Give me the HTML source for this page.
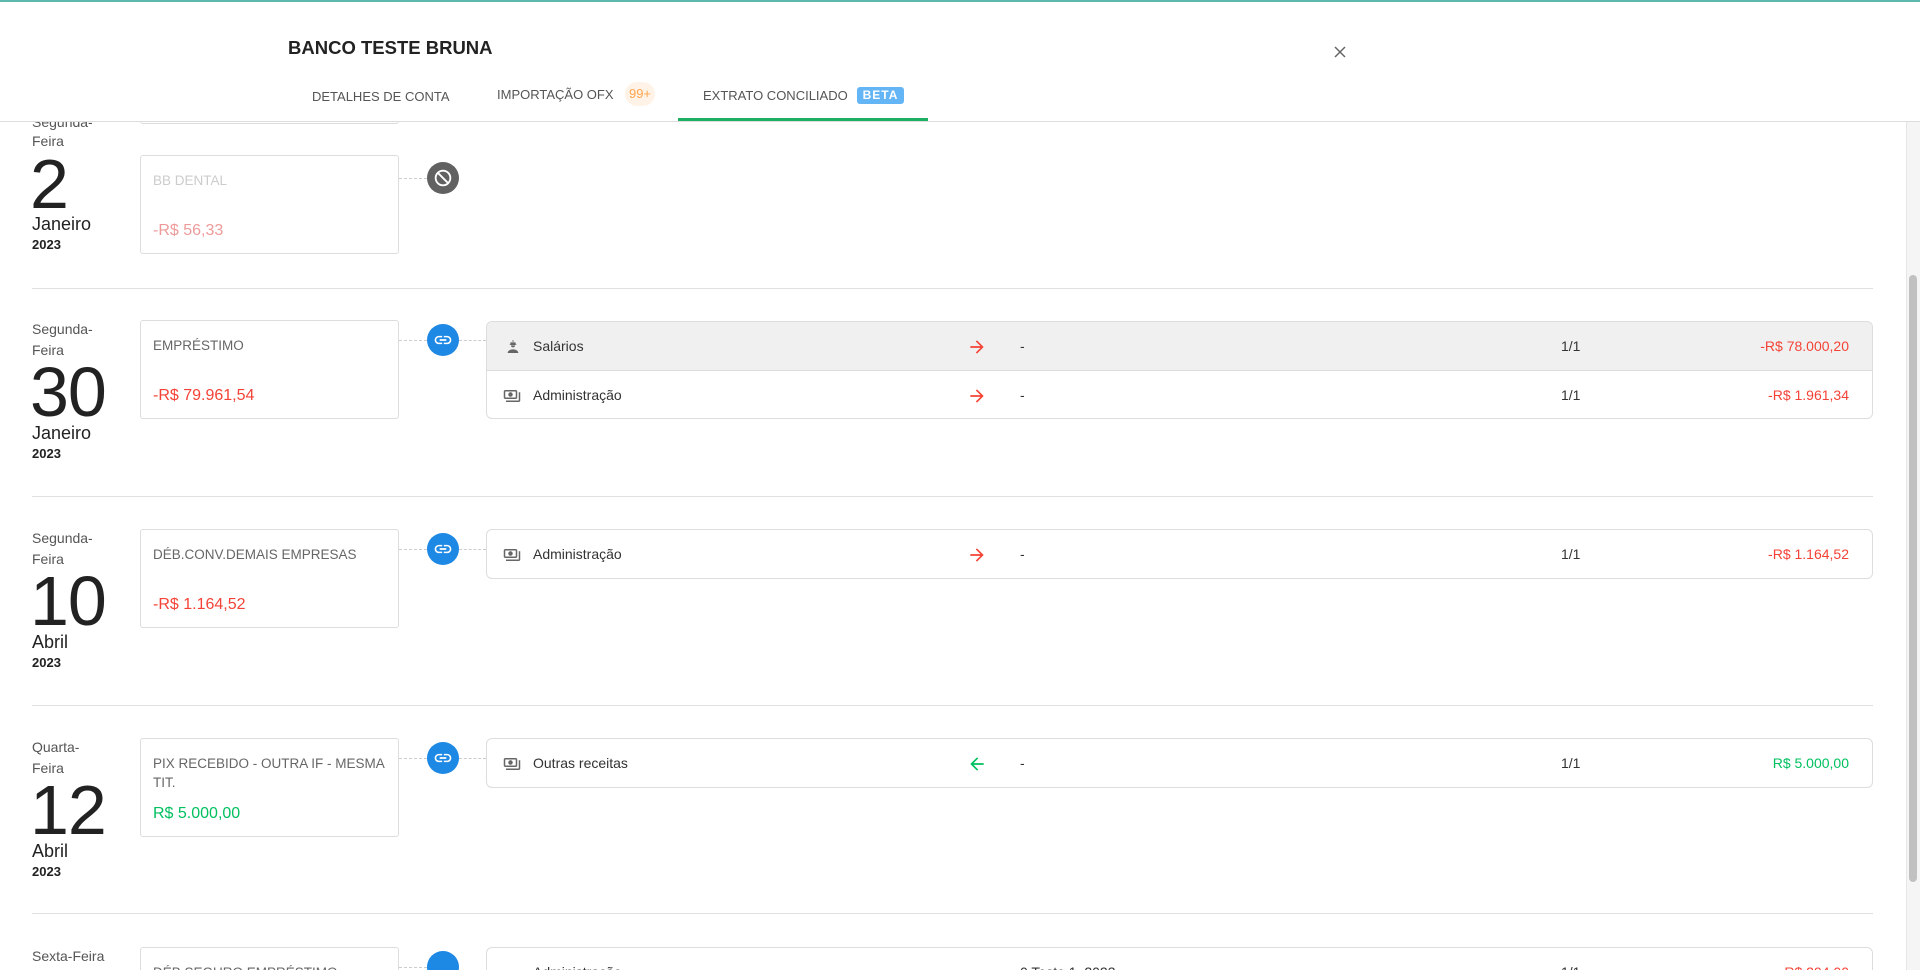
<!DOCTYPE html>
<html style="width:1920px;height:970px;overflow:hidden"><head><meta charset="utf-8">
<style>
*{margin:0;padding:0;box-sizing:border-box}
body{width:1920px;height:970px;overflow:hidden;background:#fff;font-family:"Liberation Sans",Arial,sans-serif;color:#333;position:relative}
#wrap{position:absolute;left:0;top:0;width:1920px;height:970px;overflow:hidden}
.a{position:absolute;white-space:nowrap}
.dl{font-size:14px;color:#555;line-height:18px}
.big{font-size:70px;line-height:76px;color:#222;letter-spacing:-1px}
.mon{font-size:18px;color:#222;line-height:22px}
.yr{font-size:13px;color:#222;font-weight:bold;line-height:16px}
.card{position:absolute;left:140px;width:259px;height:99px;border:1px solid #ddd;border-radius:3px;background:#fff}
.ct{position:absolute;left:12px;top:15px;font-size:13.5px;color:#666;line-height:19px;width:243px;white-space:normal}
.cv{position:absolute;left:12px;font-size:16px;line-height:20px}
.sep{position:absolute;left:32px;width:1841px;height:1px;background:#e0e0e0}
.dash{position:absolute;height:0;border-top:1px dashed #ccc}
.circ{position:absolute;width:32px;height:32px;border-radius:50%;background:#1e88e5;display:flex;align-items:center;justify-content:center}
.tbl{position:absolute;left:486px;width:1387px;border:1px solid #ddd;border-radius:6px;overflow:hidden;background:#fff}
.tr{position:relative;height:48px;font-size:14px;color:#333}
.tr+.tr{border-top:1px solid #ddd}
.tr>*{position:absolute;top:0;line-height:48px}
.tr svg{vertical-align:middle}
.red{color:#f44336}.grn{color:#00c060}
.tab{font-size:13px;color:#555;line-height:18px}
</style></head><body><div id="wrap">
<div class="a" style="left:0;top:0;width:1920px;height:2px;background:#5fb8ac"></div>

<div class="card" style="top:25px"></div>

<!-- row1 -->
<div class="a dl" style="left:32px;top:113px">Segunda-</div>
<div class="a dl" style="left:32px;top:132px">Feira</div>
<div class="a big" style="left:30px;top:146px">2</div>
<div class="a mon" style="left:32px;top:213px">Janeiro</div>
<div class="a yr" style="left:32px;top:237px">2023</div>
<div class="card" style="top:155px"><div class="ct" style="color:#ccc">BB DENTAL</div><div class="cv" style="top:65px;color:#ef9a9a">-R$ 56,33</div></div>
<div class="dash" style="left:399px;top:178px;width:28px"></div>
<div class="circ" style="left:427px;top:162px;background:#616161"><svg width="22" height="22" viewBox="0 0 24 24"><circle cx="12" cy="12" r="8" fill="none" stroke="#fff" stroke-width="2"/><path d="M6.5 6.5l11 11" stroke="#fff" stroke-width="2"/></svg></div>
<div class="sep" style="top:288px"></div>

<!-- header -->
<div class="a" style="left:0;top:2px;width:1920px;height:120px;background:#fff;border-bottom:1px solid #ddd"></div>
<div class="a" style="left:288px;top:36px;font-size:18.5px;font-weight:bold;color:#222;line-height:24px">BANCO TESTE BRUNA</div>
<svg class="a" style="left:1334px;top:46px" width="12" height="12" viewBox="0 0 12 12"><path d="M1 1l10 10M11 1L1 11" stroke="#666" stroke-width="1.5"/></svg>
<div class="a tab" style="left:312px;top:88px">DETALHES DE CONTA</div>
<div class="a tab" style="left:497px;top:86px">IMPORTAÇÃO OFX</div>
<div class="a" style="left:625px;top:82px;width:30px;height:24px;border-radius:12px;background:#fff3e8;color:#ffa64d;font-size:13px;line-height:24px;text-align:center">99+</div>
<div class="a tab" style="left:703px;top:87px">EXTRATO CONCILIADO</div>
<div class="a" style="left:857px;top:87px;width:47px;height:17px;border-radius:3px;background:#64b5f6;color:#fff;font-size:12px;font-weight:bold;letter-spacing:1px;line-height:17px;text-align:center">BETA</div>
<div class="a" style="left:678px;top:118px;width:250px;height:3px;background:#1db063"></div>

<!-- row2 -->
<div class="a dl" style="left:32px;top:320px">Segunda-</div>
<div class="a dl" style="left:32px;top:341px">Feira</div>
<div class="a big" style="left:30px;top:354px">30</div>
<div class="a mon" style="left:32px;top:422px">Janeiro</div>
<div class="a yr" style="left:32px;top:446px">2023</div>
<div class="card" style="top:320px"><div class="ct">EMPRÉSTIMO</div><div class="cv red" style="top:65px">-R$ 79.961,54</div></div>
<div class="dash" style="left:399px;top:340px;width:28px"></div>
<div class="dash" style="left:459px;top:340px;width:27px"></div>
<div class="circ" style="left:427px;top:324px"><svg width="20" height="20" viewBox="0 0 24 24"><path d="M3.9 12c0-1.7 1.4-3.1 3.1-3.1h4V7H7c-2.8 0-5 2.2-5 5s2.2 5 5 5h4v-1.9H7c-1.7 0-3.1-1.4-3.1-3.1zM8 13h8v-2H8v2zm9-6h-4v1.9h4c1.7 0 3.1 1.4 3.1 3.1s-1.4 3.1-3.1 3.1h-4V17h4c2.8 0 5-2.2 5-5s-2.2-5-5-5z" fill="#fff"/></svg></div>
<div class="tbl" style="top:321px">
 <div class="tr" style="background:#f0f0f0"><span style="left:18px"><svg width="16" height="16" viewBox="0 0 24 24"><path d="M11 2h2v2h-2zM8 5h8v3H8zM7 8h10v1H7zM9 9.5a3 3 0 006 0zM4 21c0-3.5 4-5.5 8-5.5s8 2 8 5.5z" fill="#666"/></svg></span><span style="left:46px">Salários</span><span style="left:480px"><svg width="20" height="20" viewBox="0 0 24 24"><path d="M12 4l-1.41 1.41L16.170 11H4v2h12.17l-5.58 5.59L12 20l8-8z" fill="#f44336"/></svg></span><span style="left:533px">-</span><span style="left:1074px">1/1</span><span style="right:23px" class="red">-R$ 78.000,20</span></div>
 <div class="tr"><span style="left:16px"><svg width="18" height="18" viewBox="0 0 24 24"><path d="M19 14V6c0-1.1-.9-2-2-2H3c-1.1 0-2 .9-2 2v8c0 1.1.9 2 2 2h14c1.1 0 2-.9 2-2zm-2 0H3V6h14v8zm-7-7c-1.66 0-3 1.34-3 3s1.34 3 3 3 3-1.34 3-3-1.34-3-3-3zm13 0v11c0 1.1-.9 2-2 2H4v-2h17V7h2z" fill="#666"/></svg></span><span style="left:46px">Administração</span><span style="left:480px"><svg width="20" height="20" viewBox="0 0 24 24"><path d="M12 4l-1.41 1.41L16.17 11H4v2h12.17l-5.58 5.59L12 20l8-8z" fill="#f44336"/></svg></span><span style="left:533px">-</span><span style="left:1074px">1/1</span><span style="right:23px" class="red">-R$ 1.961,34</span></div>
</div>
<div class="sep" style="top:496px"></div>

<!-- row3 -->
<div class="a dl" style="left:32px;top:529px">Segunda-</div>
<div class="a dl" style="left:32px;top:550px">Feira</div>
<div class="a big" style="left:30px;top:563px">10</div>
<div class="a mon" style="left:32px;top:631px">Abril</div>
<div class="a yr" style="left:32px;top:655px">2023</div>
<div class="card" style="top:529px"><div class="ct">DÉB.CONV.DEMAIS EMPRESAS</div><div class="cv red" style="top:65px">-R$ 1.164,52</div></div>
<div class="dash" style="left:399px;top:549px;width:28px"></div>
<div class="dash" style="left:459px;top:549px;width:27px"></div>
<div class="circ" style="left:427px;top:533px"><svg width="20" height="20" viewBox="0 0 24 24"><path d="M3.9 12c0-1.7 1.4-3.1 3.1-3.1h4V7H7c-2.8 0-5 2.2-5 5s2.2 5 5 5h4v-1.9H7c-1.7 0-3.1-1.4-3.1-3.1zM8 13h8v-2H8v2zm9-6h-4v1.9h4c1.7 0 3.1 1.4 3.1 3.1s-1.4 3.1-3.1 3.1h-4V17h4c2.8 0 5-2.2 5-5s-2.2-5-5-5z" fill="#fff"/></svg></div>
<div class="tbl" style="top:529px">
 <div class="tr"><span style="left:16px"><svg width="18" height="18" viewBox="0 0 24 24"><path d="M19 14V6c0-1.1-.9-2-2-2H3c-1.1 0-2 .9-2 2v8c0 1.1.9 2 2 2h14c1.1 0 2-.9 2-2zm-2 0H3V6h14v8zm-7-7c-1.66 0-3 1.34-3 3s1.34 3 3 3 3-1.34 3-3-1.34-3-3-3zm13 0v11c0 1.1-.9 2-2 2H4v-2h17V7h2z" fill="#666"/></svg></span><span style="left:46px">Administração</span><span style="left:480px"><svg width="20" height="20" viewBox="0 0 24 24"><path d="M12 4l-1.41 1.41L16.17 11H4v2h12.17l-5.58 5.59L12 20l8-8z" fill="#f44336"/></svg></span><span style="left:533px">-</span><span style="left:1074px">1/1</span><span style="right:23px" class="red">-R$ 1.164,52</span></div>
</div>
<div class="sep" style="top:705px"></div>

<!-- row4 -->
<div class="a dl" style="left:32px;top:738px">Quarta-</div>
<div class="a dl" style="left:32px;top:759px">Feira</div>
<div class="a big" style="left:30px;top:772px">12</div>
<div class="a mon" style="left:32px;top:840px">Abril</div>
<div class="a yr" style="left:32px;top:864px">2023</div>
<div class="card" style="top:738px"><div class="ct">PIX RECEBIDO - OUTRA IF - MESMA TIT.</div><div class="cv grn" style="top:65px">R$ 5.000,00</div></div>
<div class="dash" style="left:399px;top:758px;width:28px"></div>
<div class="dash" style="left:459px;top:758px;width:27px"></div>
<div class="circ" style="left:427px;top:742px"><svg width="20" height="20" viewBox="0 0 24 24"><path d="M3.9 12c0-1.7 1.4-3.1 3.1-3.1h4V7H7c-2.8 0-5 2.2-5 5s2.2 5 5 5h4v-1.9H7c-1.7 0-3.1-1.4-3.1-3.1zM8 13h8v-2H8v2zm9-6h-4v1.9h4c1.7 0 3.1 1.4 3.1 3.1s-1.4 3.1-3.1 3.1h-4V17h4c2.8 0 5-2.2 5-5s-2.2-5-5-5z" fill="#fff"/></svg></div>
<div class="tbl" style="top:738px">
 <div class="tr"><span style="left:16px"><svg width="18" height="18" viewBox="0 0 24 24"><path d="M19 14V6c0-1.1-.9-2-2-2H3c-1.1 0-2 .9-2 2v8c0 1.1.9 2 2 2h14c1.1 0 2-.9 2-2zm-2 0H3V6h14v8zm-7-7c-1.66 0-3 1.34-3 3s1.34 3 3 3 3-1.34 3-3-1.34-3-3-3zm13 0v11c0 1.1-.9 2-2 2H4v-2h17V7h2z" fill="#666"/></svg></span><span style="left:46px">Outras receitas</span><span style="left:480px"><svg width="20" height="20" viewBox="0 0 24 24"><path d="M20 11H7.83l5.59-5.59L12 4l-8 8 8 8 1.41-1.41L7.83 13H20v-2z" fill="#00c060"/></svg></span><span style="left:533px">-</span><span style="left:1074px">1/1</span><span style="right:23px" class="grn">R$ 5.000,00</span></div>
</div>
<div class="sep" style="top:913px"></div>

<!-- row5 -->
<div class="a dl" style="left:32px;top:947px">Sexta-Feira</div>
<div class="card" style="top:947px"><div class="ct">DÉB.SEGURO EMPRÉSTIMO</div></div>
<div class="dash" style="left:399px;top:967px;width:28px"></div>
<div class="circ" style="left:427px;top:951px"></div>
<div class="tbl" style="top:947px">
 <div class="tr"><span style="left:46px">Administração</span><span style="left:533px">0 Teste 1_2023</span><span style="left:1074px">1/1</span><span style="right:23px" class="red">-R$ 294,00</span></div>
</div>

<!-- scrollbar -->
<div class="a" style="left:1906px;top:122px;width:14px;height:848px;background:#f5f5f5;border-left:1px solid #e6e6e6"></div>
<div class="a" style="left:1909px;top:275px;width:8px;height:607px;background:#c1c1c1;border-radius:4px"></div>
</div></body></html>
